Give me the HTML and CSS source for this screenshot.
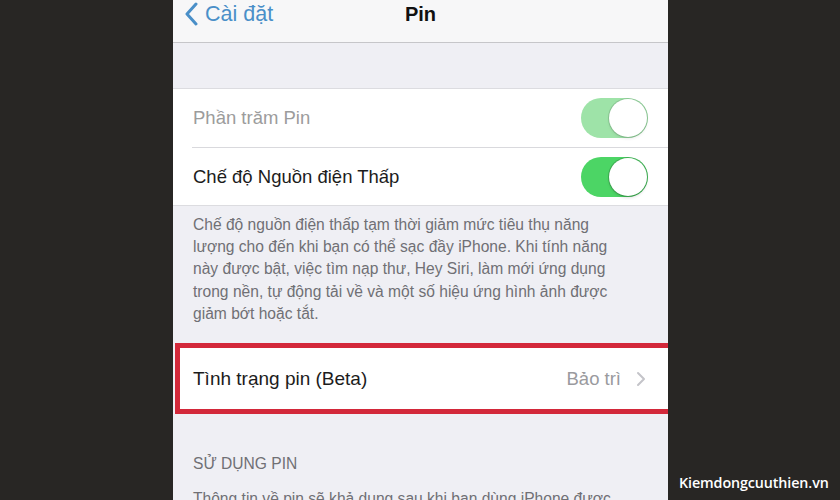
FILE: index.html
```html
<!DOCTYPE html>
<html lang="vi">
<head>
<meta charset="utf-8">
<title>Pin</title>
<link rel="stylesheet" href="styles.css">
</head>
<body>
<div class="stage">
  <div class="side side-left"></div>
  <div class="phone">
    <div class="navbar">
      <div class="back">
        <svg class="back-icon" width="14" height="24" viewBox="0 0 14 24"><path d="M12 2 L3 12 L12 22" fill="none" stroke="#4a8fc8" stroke-width="3" stroke-linecap="round" stroke-linejoin="round"/></svg>
        <span class="back-label">Cài đặt</span>
      </div>
      <div class="nav-title">Pin</div>
    </div>
    <div class="spacer-top"></div>
    <div class="group">
      <div class="cell">
        <span class="cell-label dim">Phần trăm Pin</span>
        <span class="switch switch-dim"><span class="knob"></span></span>
      </div>
      <div class="cell">
        <span class="cell-label">Chế độ Nguồn điện Thấp</span>
        <span class="switch"><span class="knob"></span></span>
      </div>
    </div>
    <p class="footnote">Chế độ nguồn điện thấp tạm thời giảm mức tiêu thụ năng<br>lượng cho đến khi bạn có thể sạc đầy iPhone. Khi tính năng<br>này được bật, việc tìm nạp thư, Hey Siri, làm mới ứng dụng<br>trong nền, tự động tải về và một số hiệu ứng hình ảnh được<br>giảm bớt hoặc tắt.</p>
    <div class="highlight">
      <div class="cell cell-nav">
        <span class="cell-label">Tình trạng pin (Beta)</span>
        <span class="cell-detail">Bảo trì</span>
        <svg class="chevron" width="10" height="16" viewBox="0 0 10 16"><path d="M2 2 L8 8 L2 14" fill="none" stroke="#c4c4c9" stroke-width="2" stroke-linecap="round" stroke-linejoin="round"/></svg>
      </div>
    </div>
    <div class="section-header">SỬ DỤNG PIN</div>
    <p class="footnote footnote-2">Thông tin về pin sẽ khả dụng sau khi bạn dùng iPhone được</p>
  </div>
  <div class="side side-right">
    <div class="watermark">Kiemdongcuuthien.vn</div>
  </div>
</div>
</body>
</html>
```
FILE: styles.css
```css
* { box-sizing: border-box; }
html, body { margin: 0; padding: 0; }
body {
  width: 840px;
  height: 500px;
  overflow: hidden;
  background: #282624;
  font-family: "Liberation Sans", Arial, sans-serif;
}
.stage {
  display: flex;
  width: 840px;
  height: 500px;
}
.side { background: #282624; }
.side-left { width: 173px; }
.side-right {
  width: 172px;
  display: flex;
  flex-direction: column;
  justify-content: flex-end;
  padding: 0 0 8px 11px;
}
.watermark {
  color: #ffffff;
  font-family: "Open Sans", "Liberation Sans", sans-serif;
  font-size: 14.3px;
  font-weight: 600;
  letter-spacing: -0.1px;
}
.phone {
  width: 495px;
  height: 500px;
  overflow: hidden;
  background: #efeff4;
  display: flex;
  flex-direction: column;
}
.navbar {
  position: relative;
  height: 43px;
  flex: none;
  background: #f7f7f8;
  border-bottom: 1px solid #c6c6c9;
  display: flex;
  align-items: flex-start;
}
.back {
  display: flex;
  align-items: center;
  gap: 7px;
  padding: 2px 0 0 11px;
}
.back-icon { display: block; }
.back-label {
  color: #4a8fc8;
  font-size: 21.5px;
  line-height: 24px;
}
.nav-title {
  position: absolute;
  left: 0;
  right: 0;
  top: 2px;
  text-align: center;
  font-size: 20px;
  line-height: 24px;
  font-weight: 700;
  color: #111;
}
.spacer-top { height: 45px; flex: none; }
.group {
  flex: none;
  background: #fff;
  border-top: 1px solid #dcdce0;
  border-bottom: 1px solid #dcdce0;
}
.cell {
  height: 58px;
  display: flex;
  align-items: center;
  padding: 0 20px 0 20px;
  background: #fff;
}
.group .cell + .cell { border-top: 1px solid #d9d9dd; margin-left: 19px; padding-left: 1px; }
.cell-label {
  flex: 1;
  font-size: 18.5px;
  color: #1c1c1c;
}
.cell-label.dim { color: #9c9c9c; }
.switch {
  position: relative;
  width: 67px;
  height: 40px;
  border-radius: 20px;
  background: #4cd565;
  flex: none;
}
.switch-dim { background: #9ee3a8; }
.knob {
  position: absolute;
  right: 1px;
  top: 1px;
  width: 38px;
  height: 38px;
  border-radius: 50%;
  background: #fff;
  box-shadow: 0 0 0 1px rgba(0,0,0,0.18), 0 2px 3px rgba(0,0,0,0.12);
}
.switch-dim .knob { box-shadow: 0 0 0 1px rgba(0,0,0,0.12), 0 2px 3px rgba(0,0,0,0.08); }
.footnote {
  margin: 0;
  padding: 8px 20px 0 20px;
  font-size: 15.6px;
  line-height: 22.2px;
  color: #707075;
  flex: none;
}
.highlight {
  flex: none;
  margin: 18px -10px 0 2px;
  border: 5px solid #d3283a;
  border-right: none;
  background: #fff;
}
.cell-nav {
  height: 61px;
  padding: 0 0 0 13px;
}
.cell-nav .cell-label { font-size: 19px; }
.cell-detail {
  font-size: 18.5px;
  color: #9a9a9e;
  margin-right: 15px;
}
.chevron { flex: none; margin-right: 32px; }
.section-header {
  flex: none;
  padding: 40px 20px 0 20px;
  font-size: 15.6px;
  line-height: 20px;
  color: #707075;
}
.footnote-2 { padding-top: 14px; }
```
